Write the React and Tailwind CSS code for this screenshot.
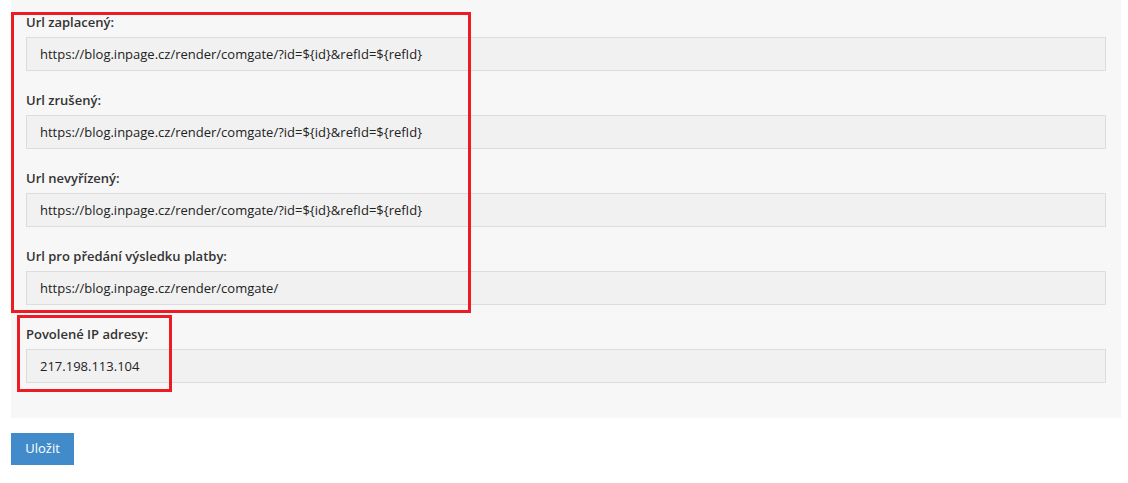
const fields = [
  { label: "Url zaplacený:", value: "https://blog.inpage.cz/render/comgate/?id=${id}&refId=${refId}" },
  { label: "Url zrušený:", value: "https://blog.inpage.cz/render/comgate/?id=${id}&refId=${refId}" },
  { label: "Url nevyřízený:", value: "https://blog.inpage.cz/render/comgate/?id=${id}&refId=${refId}" },
  { label: "Url pro předání výsledku platby:", value: "https://blog.inpage.cz/render/comgate/" },
];

function Field({ label, value, last }) {
  return (
    <div className={last ? "" : "mb-5"}>
      <label className="block h-[19px] mb-[5px] text-[13px] leading-[19px] font-semibold text-[#333]">
        {label}
      </label>
      <div className="h-[34px] bg-[#f1f1f1] border border-[#dddddd] px-[13px] text-[13px] leading-[32px] text-[#222]">
        {value}
      </div>
    </div>
  );
}

export default function App() {
  return (
    <div className="w-[1128px] h-[483px] bg-white font-['Open_Sans',sans-serif]">
      <div className="ml-[11px] w-[1110px] bg-[#f7f7f7] pt-[13px] px-[15px] pb-[35px] relative">
        {fields.map((f, i) => (
          <Field key={i} label={f.label} value={f.value} last={i === fields.length - 1} />
        ))}
        <div className="mt-5">
          <Field label="Povolené IP adresy:" value="217.198.113.104" last />
        </div>
        <div className="absolute left-0 top-[12px] w-[460px] h-[301px] border-[3px] border-[#ed1c24] pointer-events-none" />
        <div className="absolute left-[6px] top-[315px] w-[155px] h-[77px] border-[3px] border-[#ed1c24] pointer-events-none" />
      </div>
      <button className="mt-[15px] ml-[11px] w-[63px] h-[32px] bg-[#428bca] text-white text-[13px]">
        Uložit
      </button>
    </div>
  );
}
